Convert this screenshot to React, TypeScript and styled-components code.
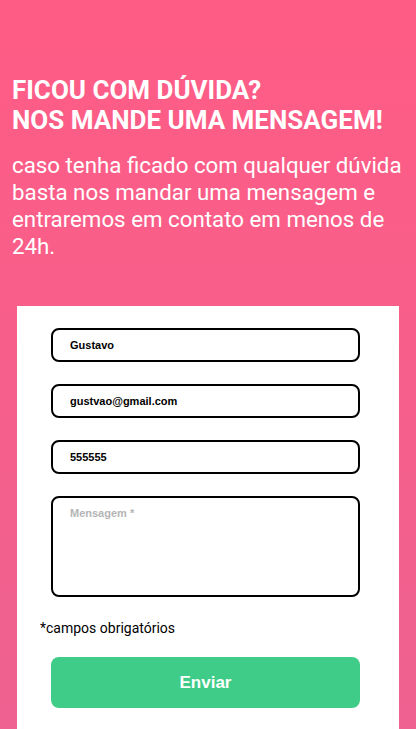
import styled, {createGlobalStyle} from "styled-components";

const GlobalStyle = createGlobalStyle`
  body {
    margin: 0;
    font-family: Roboto, "Liberation Sans", sans-serif;
  }
  * { box-sizing: border-box; }
`

const Page = styled.div`
  min-height: 100vh;
  background: linear-gradient(180deg, #ff5c85 0%, #ee6291 100%);
  padding-top: 75px;
  overflow: hidden;
`

const Intro = styled.section`
  padding: 0 12px;
  color: #fff;
`

const Title = styled.h1`
  margin: 0;
  font-size: 26px;
  line-height: 30px;
  font-weight: 700;
  text-transform: uppercase;
`

const Lead = styled.p`
  margin: 17px 0 0;
  font-size: 22.3px;
  line-height: 27px;
  font-weight: 400;
`

const Card = styled.form`
  margin: 46px 17px 0;
  background: #fff;
  padding: 22px 0 40px 34px;
  display: flex;
  flex-direction: column;
  gap: 22px;
`

const Field = styled.input`
  width: 309px;
  height: 34px;
  border: 2px solid #000;
  border-radius: 8px;
  padding: 0 17px;
  font-family: "Liberation Sans", Arial, sans-serif;
  font-size: 11px;
  font-weight: 700;
  color: #000;
  outline: none;

  &::placeholder { color: #b5b5b5; }
`

const Message = styled.textarea`
  width: 309px;
  height: 101px;
  border: 2px solid #000;
  border-radius: 8px;
  padding: 9px 17px;
  font-family: "Liberation Sans", Arial, sans-serif;
  font-size: 11px;
  font-weight: 700;
  resize: none;
  outline: none;

  &::placeholder { color: #b5b5b5; }
`

const Note = styled.span`
  margin: 0 0 0 -11px;
  font-size: 14px;
  line-height: 18px;
  color: #000;
`

const Send = styled.button`
  margin-top: -2px;
  width: 309px;
  height: 51px;
  border: none;
  border-radius: 8px;
  background: #3ecc88;
  color: #fff;
  font-family: "Liberation Sans", Arial, sans-serif;
  font-size: 17px;
  font-weight: 700;
  cursor: pointer;
`

const App = () => {
	return (
		<Page>
			<GlobalStyle/>
			<Intro>
				<Title>
					Ficou com dúvida?<br/>
					Nos mande uma mensagem!
				</Title>
				<Lead>
					caso tenha ficado com qualquer dúvida basta nos mandar uma mensagem e entraremos em contato em menos de 24h.
				</Lead>
			</Intro>
			<Card onSubmit={(e) => e.preventDefault()}>
				<Field defaultValue="Gustavo" placeholder="Nome *"/>
				<Field defaultValue="gustvao@gmail.com" placeholder="E-mail *"/>
				<Field defaultValue="555555" placeholder="Telefone *"/>
				<Message placeholder="Mensagem *"/>
				<Note>*campos obrigatórios</Note>
				<Send type="submit">Enviar</Send>
			</Card>
		</Page>
	)
}

export default App
